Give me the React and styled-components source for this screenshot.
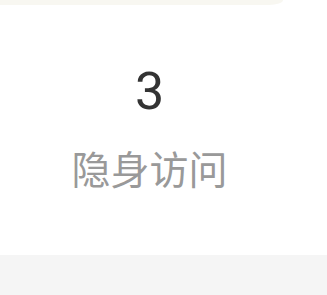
import styled, { createGlobalStyle } from 'styled-components';

const Global = createGlobalStyle`
  html, body {
    margin: 0;
    padding: 0;
    background: #ffffff;
  }
  body {
    font-family: Roboto, "Noto Sans CJK SC", sans-serif;
  }
`;

const Page = styled.div`
  width: 327px;
  height: 295px;
  display: flex;
  flex-direction: column;
  overflow: hidden;
`;

const TopCard = styled.div`
  width: 283px;
  height: 5px;
  background: #f8f7f1;
  border-bottom-right-radius: 14px 5px;
  flex-shrink: 0;
`;

const Stat = styled.div`
  width: 299px;
  height: 250px;
  display: flex;
  flex-direction: column;
  align-items: center;
  padding-top: 61px;
  box-sizing: border-box;
`;

const Value = styled.div`
  font-family: Roboto, sans-serif;
  font-size: 52px;
  line-height: 52px;
  color: #333333;
`;

const Label = styled.div`
  margin-top: 30px;
  font-family: "Noto Sans CJK SC", sans-serif;
  font-size: 39px;
  line-height: 39px;
  color: #999999;
`;

const Footer = styled.div`
  flex: 1;
  background: #f5f5f5;
`;

export default function App() {
  return (
    <Page>
      <Global />
      <TopCard />
      <Stat>
        <Value>3</Value>
        <Label>隐身访问</Label>
      </Stat>
      <Footer />
    </Page>
  );
}
